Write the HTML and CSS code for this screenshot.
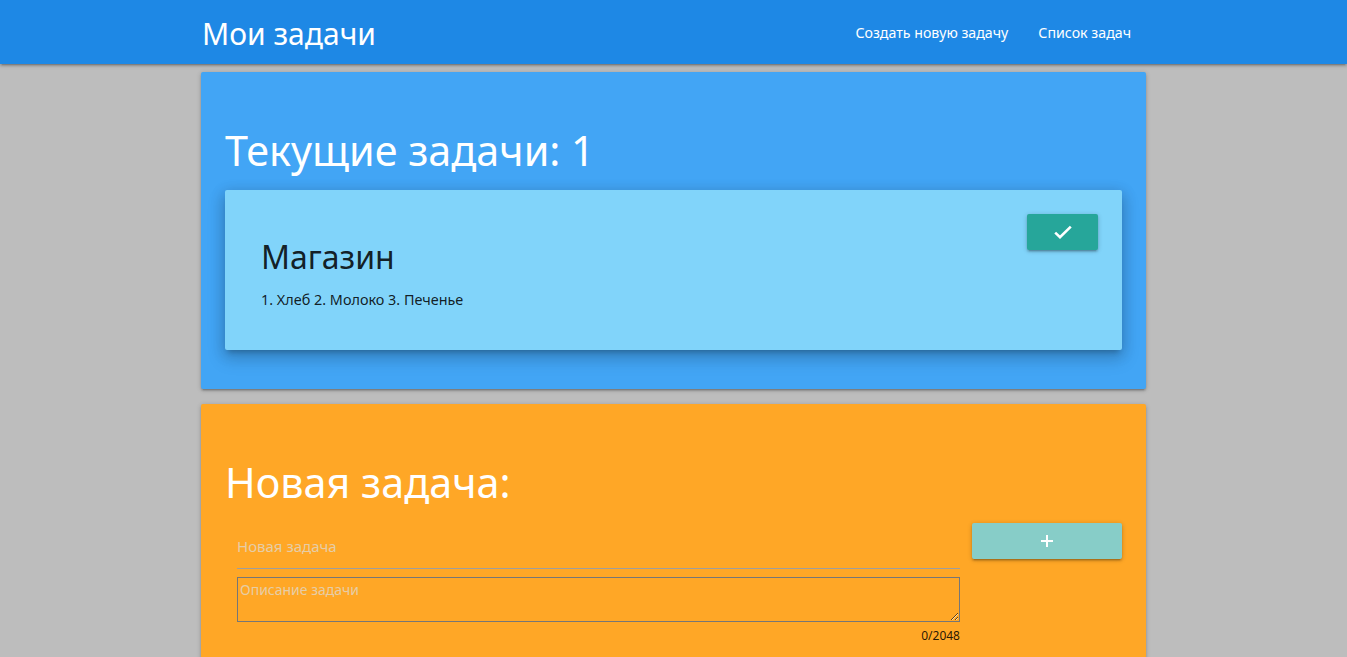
FILE: index.html
```
<!DOCTYPE html>
<html lang="ru">
<head>
<meta charset="utf-8">
<title>Мои задачи</title>
<link rel="stylesheet" href="styles.css">
</head>
<body>
<header class="nav">
  <div class="container nav-inner">
    <a class="brand" href="#">Мои задачи</a>
    <ul class="nav-links">
      <li><a href="#">Создать новую задачу</a></li>
      <li><a href="#">Список задач</a></li>
    </ul>
  </div>
</header>
<main class="container">
  <section class="panel panel-blue">
    <h3 class="panel-title">Текущие задачи: 1</h3>
    <div class="task">
      <div class="task-body">
        <h4 class="task-title">Магазин</h4>
        <p class="task-desc">1. Хлеб 2. Молоко 3. Печенье</p>
      </div>
      <button class="btn btn-check" type="button" aria-label="Выполнено">
        <svg width="24" height="24" viewBox="0 0 24 24"><path d="M4.2 12.6l4.8 4.6L19.8 6.6" fill="none" stroke="#fff" stroke-width="2.6"/></svg>
      </button>
    </div>
  </section>
  <section class="panel panel-orange">
    <h3 class="panel-title">Новая задача:</h3>
    <div class="form-row">
      <div class="form-fields">
        <input class="text-input" type="text" placeholder="Новая задача">
        <textarea class="text-area" placeholder="Описание задачи"></textarea>
        <div class="counter">0/2048</div>
      </div>
      <div class="form-action">
        <button class="btn btn-add" type="button" aria-label="Добавить">
          <svg width="14" height="14" viewBox="0 0 14 14"><path d="M7 1v12M1 7h12" stroke="#fff" stroke-width="2"/></svg>
        </button>
      </div>
    </div>
  </section>
</main>
</body>
</html>
```
FILE: styles.css
```
* { box-sizing: border-box; }
html, body { margin: 0; padding: 0; }
body {
  background: #bdbdbd;
  font-family: "Noto Sans", "Open Sans", sans-serif;
  color: rgba(0,0,0,0.87);
}
.container {
  width: 945px;
  margin: 0 auto;
}
.nav {
  background: #1e88e5;
  height: 64px;
  box-shadow: 0 2px 2px 0 rgba(0,0,0,0.14), 0 3px 1px -2px rgba(0,0,0,0.12), 0 1px 5px 0 rgba(0,0,0,0.2);
  position: relative;
  z-index: 2;
}
.nav-inner {
  display: flex;
  align-items: center;
  justify-content: space-between;
  height: 64px;
}
.brand {
  color: #fff;
  text-decoration: none;
  font-size: 30px;
  padding-left: 1px;
  padding-top: 2px;
}
.nav-links {
  list-style: none;
  display: flex;
  margin: 0;
  padding: 0;
}
.nav-links a {
  display: block;
  color: #fff;
  text-decoration: none;
  font-size: 14.2px;
  padding: 2px 15px 0;
  line-height: 64px;
}
.panel {
  margin-top: 8px;
  padding: 24px;
  box-shadow: 0 2px 2px 0 rgba(0,0,0,0.14), 0 3px 1px -2px rgba(0,0,0,0.12), 0 1px 5px 0 rgba(0,0,0,0.2);
  border-radius: 2px;
}
.panel-blue { background: #42a5f5; padding-bottom: 39px; }
.panel-orange { background: #ffa726; margin-top: 15px; min-height: 300px; }
.panel-title {
  color: #fff;
  font-weight: 400;
  font-size: 41.3px;
  line-height: 1.1;
  margin: 31.5px 0 17.5px;
}
.task {
  background: #81d4fa;
  display: flex;
  justify-content: space-between;
  align-items: flex-start;
  padding: 24px 24px 24px 36px;
  height: 160px;
  box-shadow: 0 8px 17px 2px rgba(0,0,0,0.14), 0 3px 14px 2px rgba(0,0,0,0.12), 0 5px 5px -3px rgba(0,0,0,0.2);
  border-radius: 2px;
}
.task-body { padding-top: 25px; }
.task-title {
  margin: 0;
  font-weight: 400;
  font-size: 32px;
  line-height: 1.1;
}
.task-desc {
  margin: 15px 0 0;
  font-size: 14.4px;
}
.btn {
  border: none;
  border-radius: 2px;
  display: flex;
  align-items: center;
  justify-content: center;
  height: 36px;
  padding: 0;
  box-shadow: 0 2px 2px 0 rgba(0,0,0,0.14), 0 3px 1px -2px rgba(0,0,0,0.12), 0 1px 5px 0 rgba(0,0,0,0.2);
}
.btn-check { background: #26a69a; width: 71px; }
.btn-add { background: #87cdc8; width: 150px; }
.form-row {
  display: flex;
  margin-top: 18px;
}
.form-fields {
  width: 748px;
  padding: 0 12px;
}
.form-action { flex: 1; }
.text-input {
  display: block;
  width: 100%;
  height: 46px;
  border: none;
  border-bottom: 1px solid #9e9e9e;
  background: transparent;
  font-family: inherit;
  font-size: 15px;
  padding: 0;
  margin: 0 0 8px;
  outline: none;
}
.text-area {
  display: block;
  width: 100%;
  height: 45px;
  border: 1px solid #767676;
  background: transparent;
  font-family: inherit;
  font-size: 14px;
  padding: 2px;
  margin: 0;
  resize: vertical;
}
.text-input::placeholder, .text-area::placeholder { color: #e6cda6; }
.counter {
  text-align: right;
  font-size: 12px;
  margin-top: 5px;
}
```
